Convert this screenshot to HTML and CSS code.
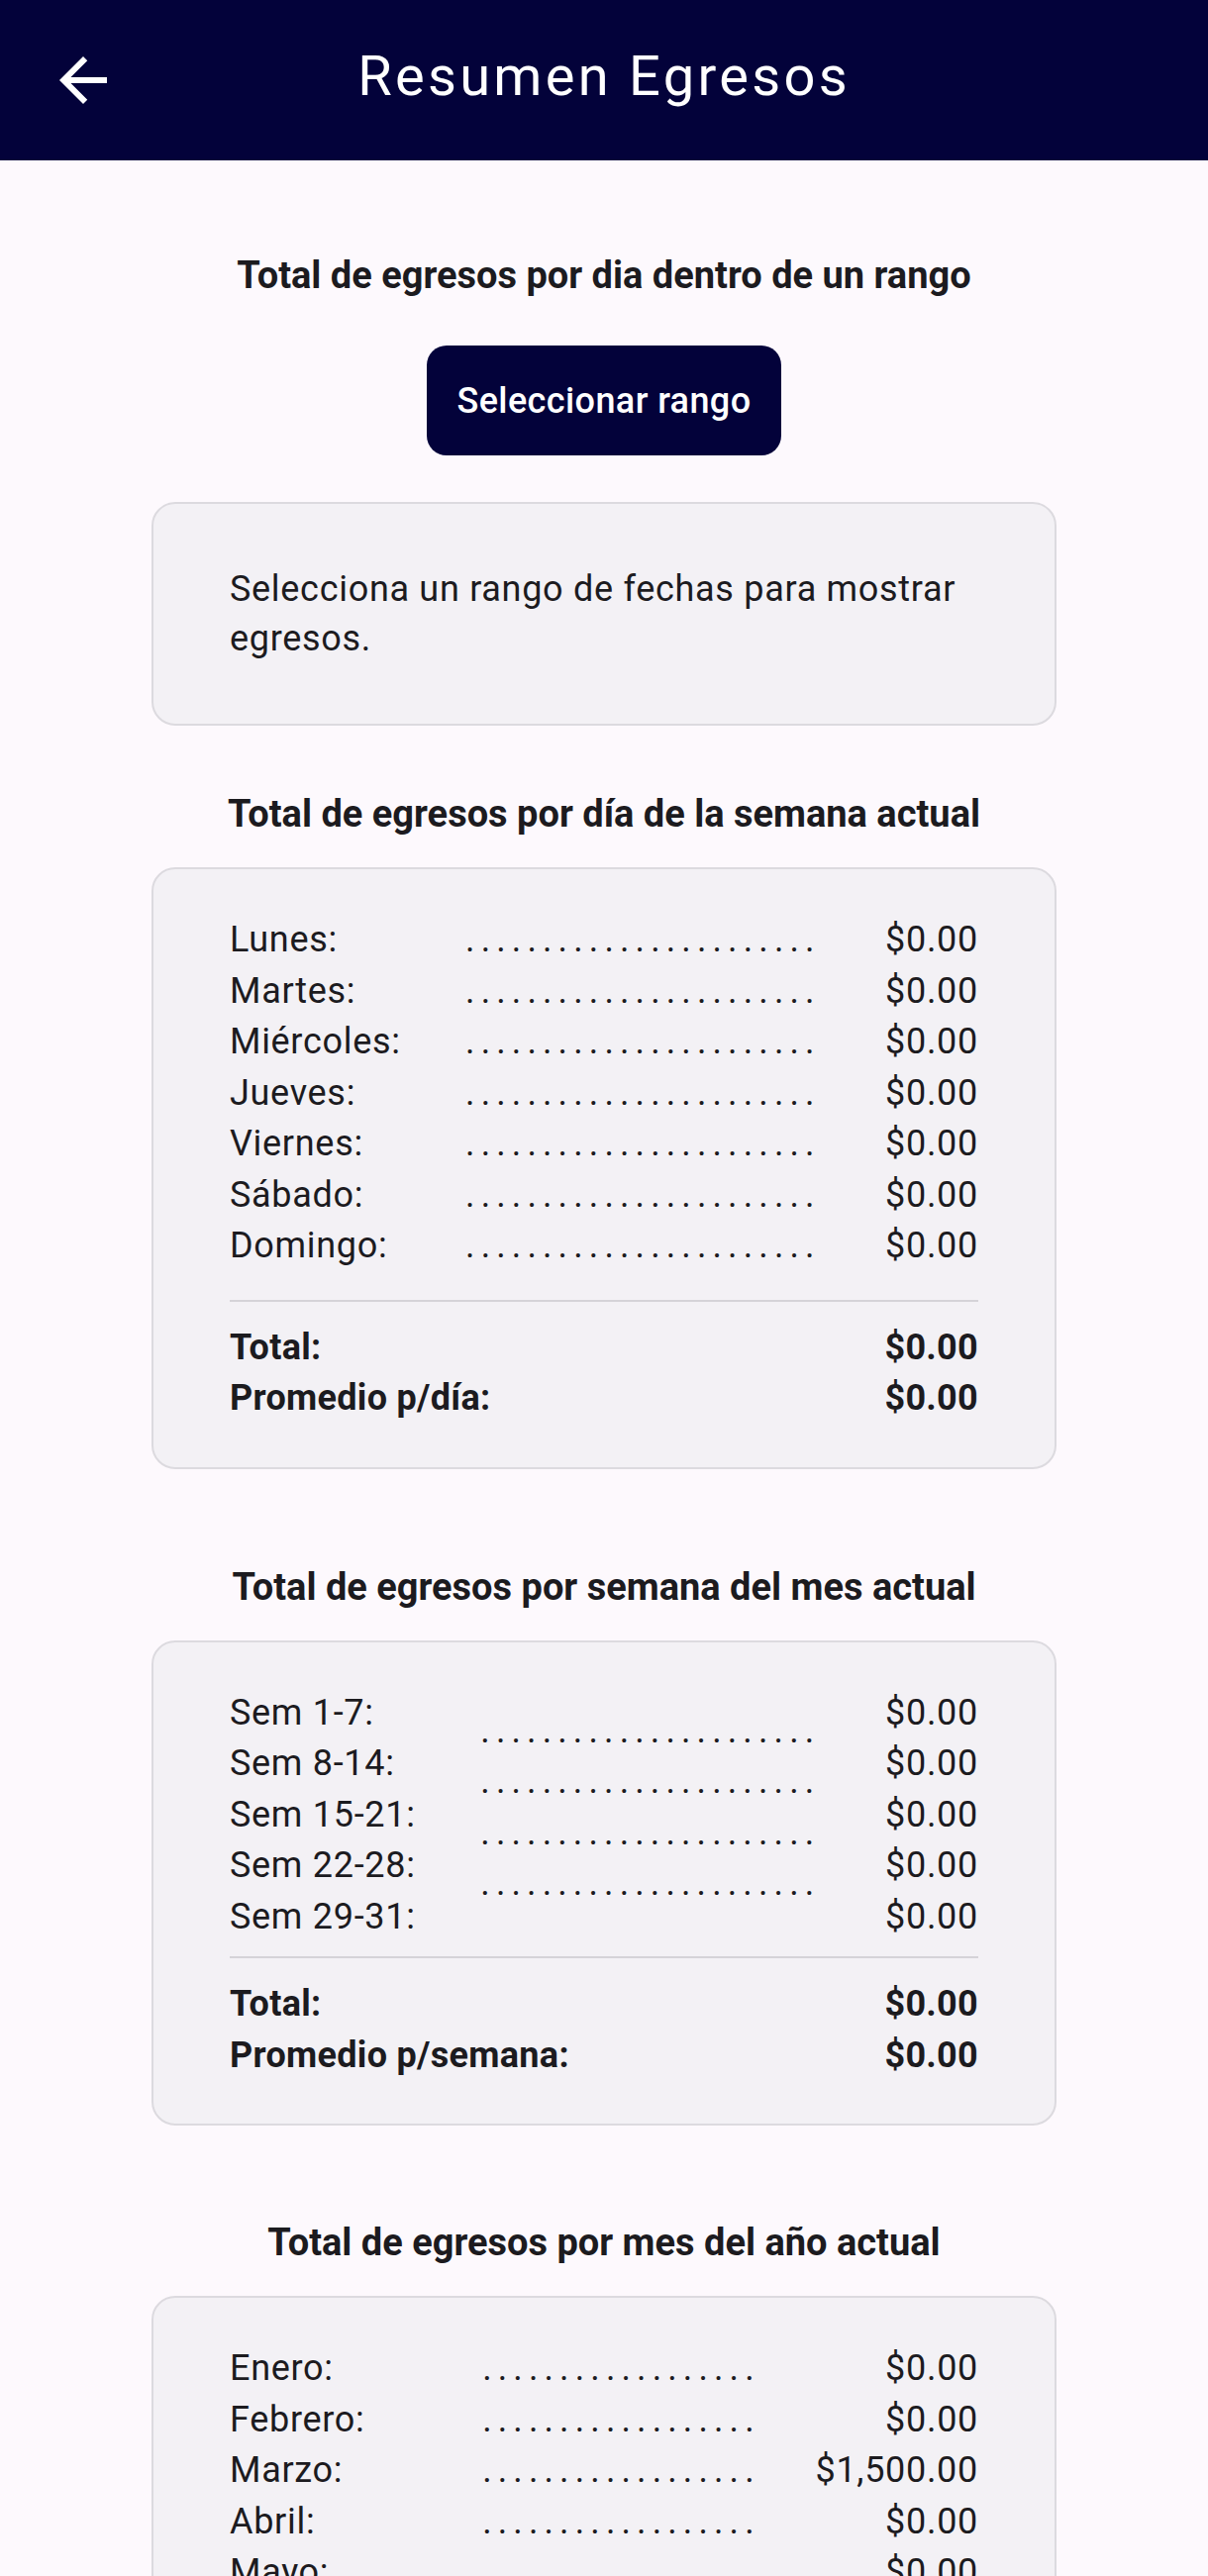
FILE: index.html
```html
<!DOCTYPE html>
<html lang="es">
<head>
<meta charset="utf-8">
<title>Resumen Egresos</title>
<link rel="stylesheet" href="styles.css">
</head>
<body>
<div class="screen">
  <header class="appbar">
    <button class="back" aria-label="Volver">
      <svg viewBox="0 0 24 24" width="72" height="72" aria-hidden="true"><path d="M20 11H7.83l5.59-5.59L12 4l-8 8 8 8 1.41-1.41L7.83 13H20v-2z" fill="#ffffff"/></svg>
    </button>
    <h1 class="appbar-title">Resumen Egresos</h1>
    <span class="appbar-spacer"></span>
  </header>

  <main class="content">
    <h2 class="section-title t-range">Total de egresos por dia dentro de un rango</h2>
    <button class="primary-btn">Seleccionar rango</button>
    <div class="card card-msg">
      <p>Selecciona un rango de fechas para mostrar egresos.</p>
    </div>

    <h2 class="section-title t-week">Total de egresos por día de la semana actual</h2>
    <div class="card card-list">
      <div class="rows">
        <div class="col labels">
          <div>Lunes:</div><div>Martes:</div><div>Miércoles:</div><div>Jueves:</div><div>Viernes:</div><div>Sábado:</div><div>Domingo:</div>
        </div>
        <div class="col dots">
          <div>.......................</div><div>.......................</div><div>.......................</div><div>.......................</div><div>.......................</div><div>.......................</div><div>.......................</div>
        </div>
        <div class="col values">
          <div>$0.00</div><div>$0.00</div><div>$0.00</div><div>$0.00</div><div>$0.00</div><div>$0.00</div><div>$0.00</div>
        </div>
      </div>
      <div class="divider div-week"></div>
      <div class="sum-row"><span>Total:</span><span>$0.00</span></div>
      <div class="sum-row"><span>Promedio p/día:</span><span>$0.00</span></div>
    </div>

    <h2 class="section-title t-month">Total de egresos por semana del mes actual</h2>
    <div class="card card-list">
      <div class="rows">
        <div class="col labels">
          <div>Sem 1-7:</div><div>Sem 8-14:</div><div>Sem 15-21:</div><div>Sem 22-28:</div><div>Sem 29-31:</div>
        </div>
        <div class="col dots dots-offset">
          <div>......................</div><div>......................</div><div>......................</div><div>......................</div>
        </div>
        <div class="col values">
          <div>$0.00</div><div>$0.00</div><div>$0.00</div><div>$0.00</div><div>$0.00</div>
        </div>
      </div>
      <div class="divider div-month"></div>
      <div class="sum-row"><span>Total:</span><span>$0.00</span></div>
      <div class="sum-row"><span>Promedio p/semana:</span><span>$0.00</span></div>
    </div>

    <h2 class="section-title t-year">Total de egresos por mes del año actual</h2>
    <div class="card card-list">
      <div class="rows">
        <div class="col labels">
          <div>Enero:</div><div>Febrero:</div><div>Marzo:</div><div>Abril:</div><div>Mayo:</div><div>Junio:</div><div>Julio:</div><div>Agosto:</div><div>Septiembre:</div><div>Octubre:</div><div>Noviembre:</div><div>Diciembre:</div>
        </div>
        <div class="col dots">
          <div>..................</div><div>..................</div><div>..................</div><div>..................</div><div>..................</div><div>..................</div><div>..................</div><div>..................</div><div>..................</div><div>..................</div><div>..................</div><div>..................</div>
        </div>
        <div class="col values">
          <div>$0.00</div><div>$0.00</div><div>$1,500.00</div><div>$0.00</div><div>$0.00</div><div>$0.00</div><div>$0.00</div><div>$0.00</div><div>$0.00</div><div>$0.00</div><div>$0.00</div><div>$0.00</div>
        </div>
      </div>
      <div class="divider div-year"></div>
      <div class="sum-row"><span>Total:</span><span>$1,500.00</span></div>
      <div class="sum-row"><span>Promedio p/mes:</span><span>$125.00</span></div>
    </div>
  </main>
</div>
</body>
</html>
```

FILE: styles.css
```css
* { box-sizing: border-box; }

html, body {
  margin: 0;
  padding: 0;
}

body {
  background: #fdf9fd;
  font-family: Roboto, "Liberation Sans", Arial, sans-serif;
  color: #1c1b1f;
}

.screen {
  height: 100vh;
  display: flex;
  flex-direction: column;
  overflow: hidden;
}

/* App bar */
.appbar {
  flex: none;
  height: 162px;
  background: #03023a;
  display: grid;
  grid-template-columns: 1fr auto 1fr;
  align-items: center;
}

.back {
  justify-self: start;
  margin-left: 48px;
  width: 72px;
  height: 72px;
  padding: 0;
  border: 0;
  background: none;
  display: block;
}

.back svg { display: block; }

.appbar-title {
  margin: 0 0 8px;
  font-size: 56px;
  font-weight: 400;
  line-height: 64px;
  letter-spacing: 3.3px;
  color: #ffffff;
  white-space: nowrap;
}

/* Content */
.content {
  flex: 1;
  min-height: 0;
  overflow: hidden;
  display: flex;
  flex-direction: column;
  align-items: center;
  padding: 0 153px;
}

.content > * { flex-shrink: 0; }

.section-title {
  margin: 0;
  font-size: 38px;
  font-weight: 700;
  line-height: 56px;
  text-align: center;
  white-space: nowrap;
}

.t-range { margin-top: 88px; }
.t-week { margin-top: 61px; }
.t-month { margin-top: 91px; }
.t-year { margin-top: 90px; }

.primary-btn {
  margin-top: 43px;
  height: 111px;
  padding: 0 30px;
  border: 0;
  border-radius: 20px;
  background: #03023a;
  color: #ffffff;
  font-family: Roboto, "Liberation Sans", Arial, sans-serif;
  font-size: 36px;
  font-weight: 500;
  letter-spacing: 0.4px;
}

.card {
  width: 100%;
  background: #f3f1f5;
  border: 2px solid #dcdadf;
  border-radius: 24px;
}

.card-msg {
  margin-top: 47px;
  padding: 61px 77px;
}

.card-msg p {
  margin: 0;
  font-size: 36px;
  line-height: 50px;
  letter-spacing: 0.7px;
}

.card-list {
  margin-top: 26px;
  padding: 46px 77px 43px;
}

.rows {
  display: flex;
  justify-content: space-between;
  align-items: flex-start;
}

.col {
  display: flex;
  flex-direction: column;
  font-size: 36px;
  line-height: 51.5px;
  letter-spacing: 0.7px;
  white-space: nowrap;
}

.values { text-align: right; }

.dots { letter-spacing: 6.1px; }

.dots-offset { padding-top: 18px; }

.divider {
  height: 2px;
  background: #d5d3d8;
}

.div-week { margin: 28px 0 21px; }
.div-month { margin: 14px 0 21px; }
.div-year { margin: 28px 0 21px; }

.sum-row {
  display: flex;
  justify-content: space-between;
  font-size: 36px;
  font-weight: 700;
  line-height: 51.5px;
  letter-spacing: 0.3px;
}
```
